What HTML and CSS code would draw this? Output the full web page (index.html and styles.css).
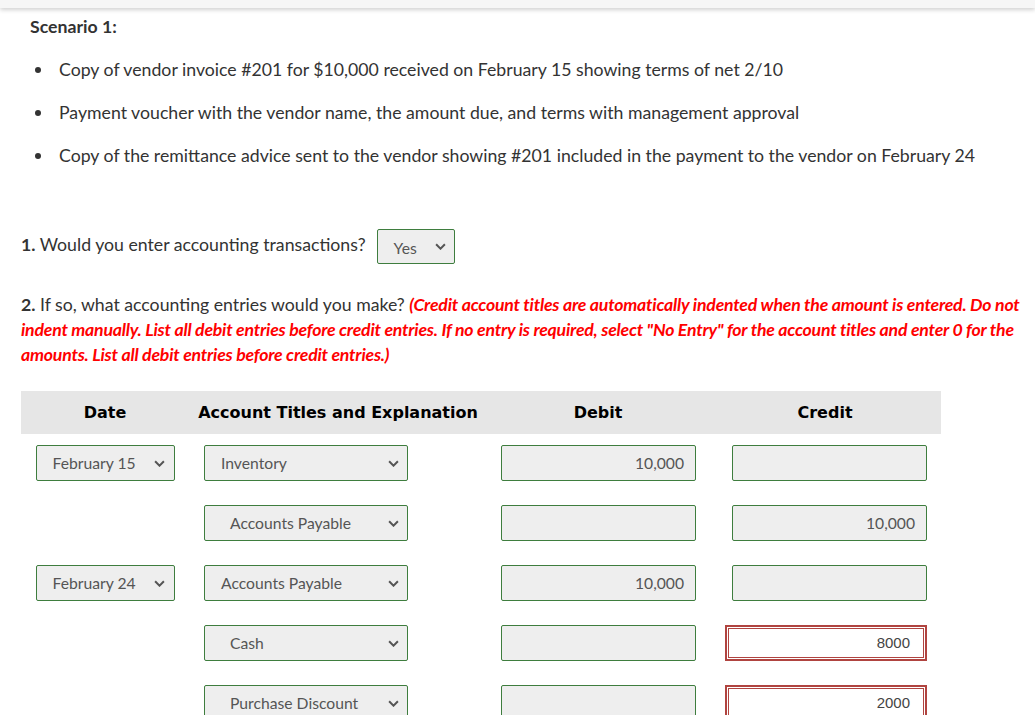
FILE: index.html
```html
<!DOCTYPE html>
<html>
<head>
<meta charset="utf-8">
<link rel="stylesheet" href="styles.css">
</head>
<body>
<div class="topbar"></div>
<div class="page">
  <h2 class="scenario">Scenario 1:</h2>
  <ul class="docs">
    <li>Copy of vendor invoice #201 for $10,000 received on February 15 showing terms of net 2/10</li>
    <li>Payment voucher with the vendor name, the amount due, and terms with management approval</li>
    <li>Copy of the remittance advice sent to the vendor showing #201 included in the payment to the vendor on February 24</li>
  </ul>

  <div class="q1">
    <span class="q1-text"><b>1.</b> Would you enter accounting transactions?</span>
    <div class="sel sel-yes"><span>Yes</span><svg class="chev" viewBox="0 0 10 6"><polyline points="1,1 5,5 9,1"/></svg></div>
  </div>

  <p class="q2"><b>2.</b> If so, what accounting entries would you make? <em class="warn">(Credit account titles are automatically indented when the amount is entered. Do not indent manually. List all debit entries before credit entries. If no entry is required, select "No Entry" for the account titles and enter 0 for the amounts. List all debit entries before credit entries.)</em></p>

  <div class="journal">
    <div class="jrow jhead">
      <div class="c-date">Date</div>
      <div class="c-acct">Account Titles and Explanation</div>
      <div class="c-debit">Debit</div>
      <div class="c-credit">Credit</div>
    </div>

    <div class="jrow">
      <div class="c-date"><div class="sel sel-date"><span>February 15</span><svg class="chev" viewBox="0 0 10 6"><polyline points="1,1 5,5 9,1"/></svg></div></div>
      <div class="c-acct"><div class="sel sel-acct"><span>Inventory</span><svg class="chev" viewBox="0 0 10 6"><polyline points="1,1 5,5 9,1"/></svg></div></div>
      <div class="c-debit"><div class="amt">10,000</div></div>
      <div class="c-credit"><div class="amt"></div></div>
    </div>

    <div class="jrow">
      <div class="c-date"></div>
      <div class="c-acct"><div class="sel sel-acct indent"><span>Accounts Payable</span><svg class="chev" viewBox="0 0 10 6"><polyline points="1,1 5,5 9,1"/></svg></div></div>
      <div class="c-debit"><div class="amt"></div></div>
      <div class="c-credit"><div class="amt">10,000</div></div>
    </div>

    <div class="jrow">
      <div class="c-date"><div class="sel sel-date"><span>February 24</span><svg class="chev" viewBox="0 0 10 6"><polyline points="1,1 5,5 9,1"/></svg></div></div>
      <div class="c-acct"><div class="sel sel-acct"><span>Accounts Payable</span><svg class="chev" viewBox="0 0 10 6"><polyline points="1,1 5,5 9,1"/></svg></div></div>
      <div class="c-debit"><div class="amt">10,000</div></div>
      <div class="c-credit"><div class="amt"></div></div>
    </div>

    <div class="jrow">
      <div class="c-date"></div>
      <div class="c-acct"><div class="sel sel-acct indent"><span>Cash</span><svg class="chev" viewBox="0 0 10 6"><polyline points="1,1 5,5 9,1"/></svg></div></div>
      <div class="c-debit"><div class="amt"></div></div>
      <div class="c-credit"><div class="amt amt-err">8000</div></div>
    </div>

    <div class="jrow">
      <div class="c-date"></div>
      <div class="c-acct"><div class="sel sel-acct indent"><span>Purchase Discount</span><svg class="chev" viewBox="0 0 10 6"><polyline points="1,1 5,5 9,1"/></svg></div></div>
      <div class="c-debit"><div class="amt"></div></div>
      <div class="c-credit"><div class="amt amt-err">2000</div></div>
    </div>
  </div>
</div>
</body>
</html>
```

FILE: styles.css
```css
* { box-sizing: border-box; }
html, body { margin: 0; padding: 0; background: #fff; }
body {
  font-family: Lato, "Open Sans", "Liberation Sans", sans-serif;
  color: #333;
  font-size: 17.7px;
  overflow: hidden;
}
.topbar {
  height: 8px;
  background: #f6f6f6;
  box-shadow: 0 2px 4px rgba(0,0,0,0.18);
  position: relative;
}
.page {
  padding-left: 21px;
  width: 1032px;
}
.scenario {
  margin: 6px 0 0 9px;
  font-size: 17.7px;
  font-weight: 700;
  line-height: 25px;
  color: #333;
}
.docs {
  margin: 18px 0 0 0;
  padding: 0 0 0 14px;
  list-style: none;
}
.docs li {
  display: flex;
  align-items: center;
  line-height: 25px;
  margin-bottom: 18px;
}
.docs li::before {
  content: "";
  flex: none;
  width: 6px;
  height: 6px;
  border-radius: 50%;
  background: #333;
  margin-right: 18px;
  margin-top: 1px;
}
.docs li:last-child { margin-bottom: 0; }

.q1 {
  display: flex;
  align-items: flex-start;
  gap: 11px;
  margin-top: 61px;
}
.q1-text {
  line-height: 25px;
  padding-top: 3px;
}
.q2 {
  margin: 28px 0 0 0;
  line-height: 25px;
  padding-right: 2px;
}
.warn {
  color: #ff0000;
  font-weight: 700;
  font-style: italic;
  letter-spacing: -0.22px;
}

.sel {
  display: flex;
  align-items: center;
  justify-content: space-between;
  height: 36px;
  background: #eeeeee;
  border: 1px solid #3e7d3e;
  border-radius: 2px;
  color: #555;
  font-size: 15.7px;
}
.chev {
  width: 11px;
  height: 7px;
  fill: none;
  stroke: #555;
  stroke-width: 1.8;
  flex: none;
}
.sel-yes {
  width: 78px;
  height: 35px;
  padding: 0 8px 0 16px;
  font-size: 15.7px;
}
.sel-yes span { padding-top: 2px; }
.sel-date {
  width: 139px;
  padding: 0 9px 0 16px;
}
.sel-acct {
  width: 204px;
  padding: 0 8px 0 16px;
}
.sel-acct.indent { padding-left: 25px; }

.journal {
  margin-top: 24px;
  width: 920px;
}
.jrow {
  display: flex;
  height: 60px;
}
.jrow > div {
  display: flex;
  padding-top: 11px;
}
.jhead {
  height: 43px;
  background: #e6e6e6;
  font-family: "DejaVu Sans", Verdana, sans-serif;
  font-weight: 700;
  font-size: 16px;
  color: #000;
}
.jhead > div {
  padding-top: 0;
  align-items: center;
  justify-content: center;
}
.c-date { width: 168px; justify-content: center; }
.c-acct { width: 298px; padding-left: 15px; }
.c-debit { width: 222px; padding-left: 14px; }
.c-credit { width: 232px; justify-content: flex-end; padding-right: 14px; }
.jhead .c-acct, .jhead .c-debit { padding-left: 0; }
.jhead .c-credit { padding-right: 0; }

.amt {
  width: 195px;
  height: 36px;
  background: #eeeeee;
  border: 1px solid #3e7d3e;
  border-radius: 2px;
  color: #555;
  font-size: 15.7px;
  text-align: right;
  line-height: 34px;
  padding-right: 11px;
}
.amt-err {
  width: 202px;
  background: #fff;
  border: 2px solid #b04440;
  box-shadow: inset 0 0 0 1px #fff, inset 0 0 0 2px #b04440;
  border-radius: 0;
  line-height: 32px;
  padding-right: 15px;
  font-family: "Liberation Sans", Arial, sans-serif;
  font-size: 15px;
  color: #444;
}
```
